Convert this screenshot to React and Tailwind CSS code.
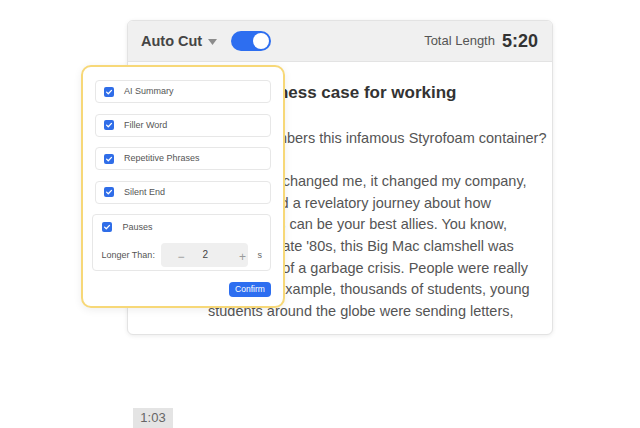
import React from "react";

function Check() {
  return (
    <span className="flex h-[10px] w-[10px] shrink-0 items-center justify-center rounded-[2px] bg-[#2f6de8]">
      <svg width="10" height="10" viewBox="0 0 10 10" fill="none">
        <path d="M2.6 5.1 L4.3 6.8 L7.5 3.4" stroke="#fff" strokeWidth="1.3" strokeLinecap="round" strokeLinejoin="round" />
      </svg>
    </span>
  );
}

function Item({ label }) {
  return (
    <div className="flex h-[23px] items-center rounded-[4px] border border-[#e7e7e7] bg-white pl-[8px]">
      <Check />
      <span className="ml-[10px] text-[9px] leading-none text-[#555]">{label}</span>
    </div>
  );
}

const lines = [
  "Who remembers this infamous Styrofoam container?",
  "",
  "Honestly, it changed me, it changed my company,",
  "and it forged a revelatory journey about how",
  "tough critics can be your best allies. You know,",
  "During the late '80s, this Big Mac clamshell was",
  "the symbol of a garbage crisis. People were really",
  "upset. For example, thousands of students, young",
  "students around the globe were sending letters,",
];

export default function App() {
  return (
    <div className="relative h-[428px] w-[640px] overflow-hidden bg-white font-['Liberation_Sans',Arial,sans-serif]">
      <div className="pl-[127px] pt-[20px]">
        <div className="h-[315px] w-[426px] overflow-hidden rounded-[6px] border border-[#e3e3e3] bg-white shadow-[0_1px_4px_rgba(0,0,0,0.08)]">
          <div className="flex h-[41px] items-center border-b border-[#e3e3e3] bg-[#f0f0f0] pl-[13px] pr-[14px]">
            <span className="mt-[1px] text-[14.5px] font-bold text-[#454545]">Auto Cut</span>
            <svg className="ml-[6px] mt-[1px]" width="9" height="6" viewBox="0 0 9 6">
              <path d="M0 0 H9 L4.5 6 Z" fill="#8c8c8c" />
            </svg>
            <span className="ml-[14px] flex h-[20px] w-[40px] items-center justify-end rounded-full bg-[#2d6ef0] pr-[2px]">
              <span className="h-[16px] w-[16px] rounded-full bg-white" />
            </span>
            <span className="ml-auto text-[13px] text-[#555]">Total Length</span>
            <span className="ml-[7px] text-[18px] font-bold text-[#333]">5:20</span>
          </div>
          <div className="pl-[80px] pt-[20px]">
            <div className="whitespace-nowrap text-[17px] font-bold leading-[22px] text-[#333]">
              The business case for working
            </div>
            <div className="mt-[24px] text-[14.5px] leading-[21.6px] text-[#555]">
              {lines.map((l, i) => (
                <div key={i} className="h-[21.6px] whitespace-nowrap">
                  {l}
                </div>
              ))}
            </div>
          </div>
        </div>
        <div className="ml-[6px] mt-[73px] flex h-[20px] w-[40px] items-center justify-center bg-[#e4e4e4] text-[13px] leading-[20px] text-[#666]">
          1:03
        </div>
      </div>

      <div className="absolute left-[81px] top-[65px] flex h-[243px] w-[204px] flex-col rounded-[10px] border-2 border-[#f7d878] bg-white px-[12px] pt-[13px] shadow-[0_2px_8px_rgba(0,0,0,0.07)]">
        <div className="flex flex-col gap-[10.5px]">
          <Item label="AI Summary" />
          <Item label="Filler Word" />
          <Item label="Repetitive Phrases" />
          <Item label="Silent End" />
          <div className="-ml-[3px] flex h-[57px] w-[179px] flex-col rounded-[4px] border border-[#e7e7e7] pl-[8.5px] pt-[7px]">
            <div className="flex items-center">
              <Check />
              <span className="ml-[11px] text-[9px] leading-none text-[#555]">Pauses</span>
            </div>
            <div className="mt-[11px] flex items-center">
              <span className="text-[9px] leading-none text-[#555]">Longer Than:</span>
              <div className="ml-[6.5px] flex h-[24px] w-[87px] items-center rounded-[4px] bg-[#efefef] pl-[16px]">
                <span className="mt-[4px] text-[12px] leading-none text-[#9a9a9a]">−</span>
                <span className="ml-[18px] text-[10px] leading-none text-[#444]">2</span>
                <span className="ml-[31px] mt-[4px] text-[12px] leading-none text-[#9a9a9a]">+</span>
              </div>
              <span className="ml-[9px] text-[9px] leading-none text-[#666]">s</span>
            </div>
          </div>
        </div>
        <div className="mt-[11px] flex h-[15px] w-[42px] items-center justify-center self-end rounded-[4px] bg-[#2d6ef0] text-[8.5px] leading-none text-white">
          Confirm
        </div>
      </div>
    </div>
  );
}
